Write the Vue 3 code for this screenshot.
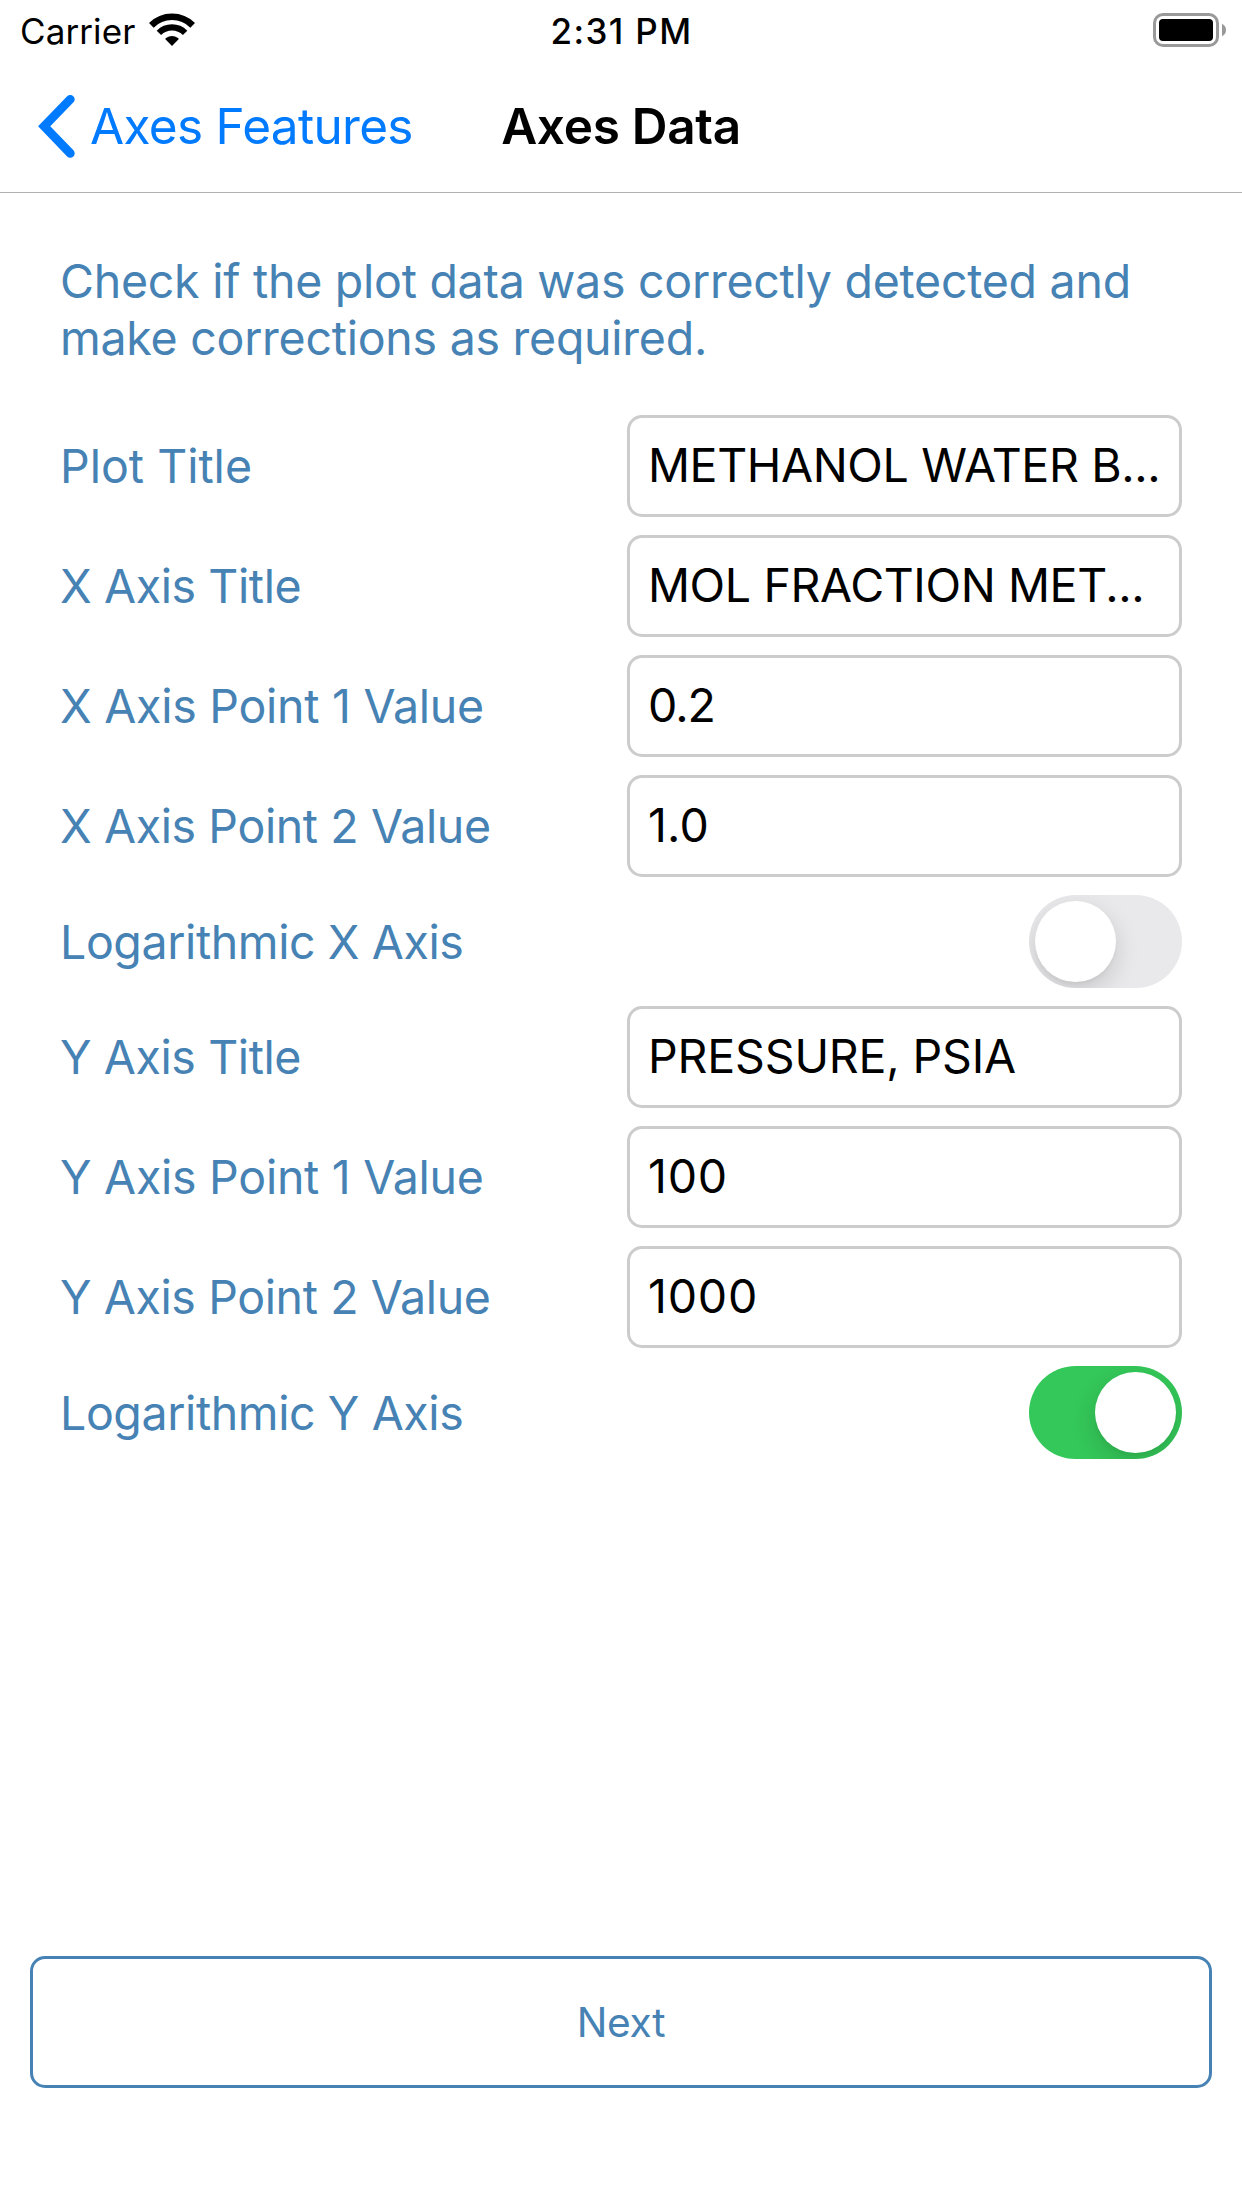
<script setup>
import { ref } from 'vue'

const rows = ref([
  { label: 'Plot Title', value: 'METHANOL WATER B...', kind: 'title' },
  { label: 'X Axis Title', value: 'MOL FRACTION MET...', kind: 'text' },
  { label: 'X Axis Point 1 Value', value: '0.2', kind: 'decimal first' },
  { label: 'X Axis Point 2 Value', value: '1.0', kind: 'decimal wide' },
  { label: 'Logarithmic X Axis', on: false, kind: 'switch' },
  { label: 'Y Axis Title', value: 'PRESSURE, PSIA', kind: 'text short' },
  { label: 'Y Axis Point 1 Value', value: '100', kind: 'integer first' },
  { label: 'Y Axis Point 2 Value', value: '1000', kind: 'integer' },
  { label: 'Logarithmic Y Axis', on: true, kind: 'switch' }
])
</script>

<template>
  <div class="screen">
    <header class="status">
      <div class="carrier">
        <span>Carrier</span>
        <svg class="wifi" width="46" height="34" viewBox="0 0 46 34">
          <g fill="none" stroke="#000">
            <path d="M2.35 12.35A29.2 29.2 0 0 1 43.65 12.35" stroke-width="6.6" />
            <path d="M9.9 19.9A18.5 18.5 0 0 1 36.1 19.9" stroke-width="6.2" />
          </g>
          <path d="M23 33L16.4 26.2Q16.2 25.5 17 25A10.5 10.5 0 0 1 29 25Q29.8 25.5 29.6 26.2Z" />
        </svg>
      </div>
      <div class="time">2:31 PM</div>
      <svg class="battery" width="74" height="34" viewBox="0 0 74 34">
        <rect x="1.5" y="1.5" width="63" height="31" rx="8.5" fill="none" stroke="#999" stroke-width="3" />
        <rect x="6" y="6" width="54" height="22" rx="4" />
        <path d="M69 10.7Q73 12.8 73 17Q73 21.2 69 23.3Z" fill="#999" />
      </svg>
    </header>

    <nav class="nav">
      <a class="back">
        <svg width="38" height="64" viewBox="0 0 38 64">
          <path d="M33.3 5.3L7.2 32.3L33.3 59.4" fill="none" stroke="#007aff" stroke-width="8.8" stroke-linecap="round" />
        </svg>
        <span>Axes Features</span>
      </a>
      <h1>Axes Data</h1>
    </nav>

    <main class="content">
      <p class="intro">Check if the plot data was correctly detected and<br />make corrections as required.</p>
      <div class="form">
        <div v-for="row in rows" :key="row.label" class="row" :class="row.kind">
          <span class="label">{{ row.label }}</span>
          <div v-if="row.kind === 'switch'" class="toggle" :class="{ on: row.on }" @click="row.on = !row.on">
            <span class="knob"></span>
          </div>
          <div v-else class="field">{{ row.value }}</div>
        </div>
      </div>
    </main>

    <footer class="footer">
      <button class="next">Next</button>
    </footer>
  </div>
</template>

<style>
body {
  margin: 0;
  background: #fff;
}
</style>

<style scoped>
.screen {
  box-sizing: border-box;
  display: flex;
  flex-direction: column;
  width: 1242px;
  height: 2208px;
  background: #fff;
  color: #000;
  font-family: Inter, "Liberation Sans", sans-serif;
}

.status,
.nav {
  box-sizing: border-box;
  display: grid;
  grid-template-columns: 1fr auto 1fr;
  align-items: center;
}

.status {
  height: 60px;
  padding: 0 15px 0 20px;
  font-size: 35px;
  line-height: 44px;
}

.carrier {
  display: flex;
  align-items: center;
}

.carrier span {
  width: 129px;
  padding-top: 2px;
  letter-spacing: 0.1px;
}

.time {
  padding: 2px 0 0 1px;
  margin-left: -5px;
  font-weight: 550;
  letter-spacing: 1.38px;
}

.battery {
  justify-self: end;
}

.nav {
  height: 133px;
  padding: 0 37px;
  border-bottom: 1px solid #b1b1b1;
  font-size: 49.5px;
}

.back {
  display: flex;
  align-items: center;
  gap: 15px;
  color: #007aff;
  letter-spacing: -0.68px;
  white-space: nowrap;
}

h1 {
  margin: 0;
  font-size: 49.5px;
  font-weight: 600;
  letter-spacing: -0.3px;
}

.content {
  flex: 1;
  padding: 60px 60px 0;
  font-size: 46.5px;
}

.intro {
  margin: 0 0 48px;
  color: #4682b4;
  line-height: 57px;
  letter-spacing: -0.26px;
  white-space: nowrap;
}

.form {
  display: flex;
  flex-direction: column;
  gap: 18px;
}

.row {
  display: flex;
  align-items: center;
  justify-content: space-between;
}

.label {
  color: #4682b4;
  letter-spacing: -0.4px;
}

.first .label {
  letter-spacing: -0.27px;
}

.title .label {
  letter-spacing: 0;
}

.field {
  box-sizing: border-box;
  width: 555px;
  height: 102px;
  padding: 0 18px;
  border: 3px solid #ccc;
  border-radius: 15px;
  line-height: 94px;
  letter-spacing: -0.38px;
  white-space: nowrap;
}

.short .field {
  letter-spacing: -0.17px;
}

.decimal .field {
  letter-spacing: -1px;
}

.wide .field {
  letter-spacing: 0.2px;
}

.integer .field {
  letter-spacing: 0.8px;
}

.toggle {
  box-sizing: border-box;
  display: flex;
  width: 153px;
  height: 93px;
  padding: 6px;
  overflow: hidden;
  border-radius: 47px;
  background: #e9e9eb;
}

.toggle.on {
  justify-content: flex-end;
  background: #34c759;
}

.knob {
  width: 81px;
  height: 81px;
  border-radius: 50%;
  background: #fff;
  box-shadow: 0 9px 24px rgba(0, 0, 0, 0.15), 0 3px 3px rgba(0, 0, 0, 0.03);
}

.footer {
  padding: 0 30px 120px;
}

.next {
  display: block;
  box-sizing: border-box;
  width: 100%;
  height: 132px;
  padding: 0;
  border: 3px solid #4682b4;
  border-radius: 15px;
  background: #fff;
  color: #4682b4;
  font-family: inherit;
  font-size: 40.7px;
  letter-spacing: -0.26px;
}
</style>
